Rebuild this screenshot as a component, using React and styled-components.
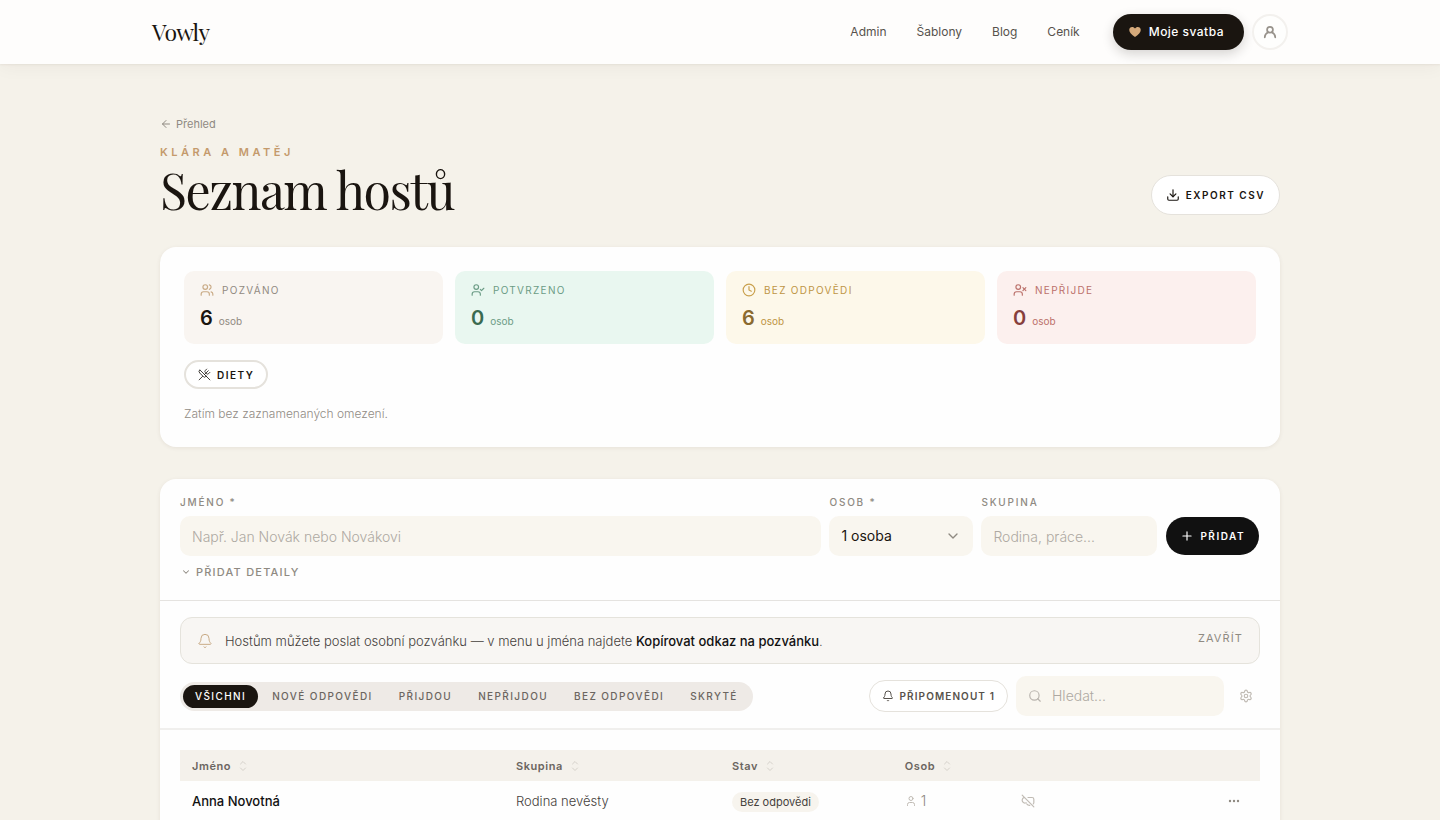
import React from 'react';
import styled, { createGlobalStyle } from 'styled-components';
import {
  ArrowLeft, Bell, ChevronDown, Clock, Download, Plus, Search, Settings,
  User, UserCheck, Users, UserX, UtensilsCrossed
} from 'lucide-react';

const GlobalStyle = createGlobalStyle`
  * { box-sizing: border-box; }
  body {
    margin: 0;
    background: #f5f2ea;
    color: #1a1510;
    font-family: Inter, "Liberation Sans", sans-serif;
    font-size: 14px;
    line-height: 20px;
  }
  button, input, select { font: inherit; color: inherit; margin: 0; }
  button { cursor: pointer; background: none; border: 0; padding: 0; }
  svg { flex: none; }
`;

const Header = styled.header`
  background: #fefdfc;
  box-shadow: 0 1px 2px rgba(60, 40, 20, 0.06), 0 2px 18px rgba(60, 40, 20, 0.05);
`;

const HeaderInner = styled.div`
  max-width: 1136px;
  height: 64px;
  margin: 0 auto;
  display: flex;
  align-items: center;
  justify-content: space-between;
`;

const Logo = styled.a`
  font-family: "Playfair Display", "Liberation Serif", serif;
  font-size: 23px;
  line-height: 32px;
  letter-spacing: -0.03em;
  color: #1a1510;
  text-decoration: none;
`;

const Nav = styled.nav`
  display: flex;
  align-items: center;
  gap: 30px;
`;

const NavLink = styled.a`
  font-size: 12px;
  font-weight: 400;
  color: #57524c;
  text-decoration: none;
`;

const NavActions = styled.div`
  display: flex;
  gap: 8px;
  margin-left: 3px;
`;

const WeddingButton = styled.a`
  display: flex;
  align-items: center;
  gap: 8px;
  height: 36px;
  padding: 0 20px 0 16px;
  border-radius: 18px;
  background: #1a1510;
  color: #fff;
  font-size: 12px;
  font-weight: 550;
  letter-spacing: 0.04em;
  text-decoration: none;
  box-shadow: 0 4px 12px rgba(26, 21, 16, 0.18);
`;

const Avatar = styled.button`
  display: grid;
  place-items: center;
  width: 36px;
  height: 36px;
  border: 2px solid #f3f1ee;
  border-radius: 50%;
  background: #fefefd;
  color: #98938c;
`;

const Main = styled.main`
  max-width: 1168px;
  margin: 0 auto;
  padding: 50px 24px 0;
`;

const PageHead = styled.div`
  display: flex;
  align-items: flex-end;
  justify-content: space-between;
  margin-bottom: 32px;
`;

const BackLink = styled.a`
  display: flex;
  align-items: center;
  gap: 4px;
  font-size: 11px;
  color: #8f8a82;
  text-decoration: none;
`;

const Couple = styled.p`
  margin: 10px 0 0;
  font-size: 11px;
  line-height: 16px;
  font-weight: 600;
  letter-spacing: 0.32em;
  text-transform: uppercase;
  color: #c49a6c;
`;

const Title = styled.h1`
  margin: 5px 0 0;
  font-family: "Playfair Display", "Liberation Serif", serif;
  font-size: 50px;
  line-height: 50px;
  font-weight: 400;
  letter-spacing: -0.03em;
`;

const PillButton = styled.button`
  display: flex;
  align-items: center;
  gap: 6px;
  height: ${(p) => p.$height || 32}px;
  padding: 0 ${(p) => p.$pad || 12}px;
  border: ${(p) => p.$border || 1}px solid #e5e2dc;
  border-radius: 20px;
  background: #fff;
  color: ${(p) => p.$color || '#1a1510'};
  font-size: 10px;
  font-weight: 600;
  letter-spacing: ${(p) => p.$tracking || '0.15em'};
  text-transform: uppercase;
`;

const Card = styled.section`
  background: #fefefe;
  border-radius: 16px;
  box-shadow: 0 1px 4px rgba(60, 40, 20, 0.08);
`;

const Summary = styled(Card)`
  padding: 24px;
  margin-bottom: 32px;
`;

const Stats = styled.div`
  display: grid;
  grid-template-columns: repeat(4, 1fr);
  gap: 12px;
  margin-bottom: 16px;
`;

const Stat = styled.div`
  padding: 9px 16px 11px;
  border-radius: 10px;
  background: ${(p) => p.$bg};
  color: ${(p) => p.$color};
`;

const StatLabel = styled.div`
  display: flex;
  align-items: center;
  gap: 8px;
  font-size: 10px;
  letter-spacing: 0.13em;
  text-transform: uppercase;

  svg { color: ${(p) => p.$icon}; }
`;

const StatValue = styled.div`
  display: flex;
  align-items: baseline;
  gap: 6px;
  margin-top: 6px;
  font-size: 10px;
  line-height: 24px;

  strong {
    font-size: 20px;
    font-weight: 600;
    color: ${(p) => p.$color};
  }
`;

const EmptyNote = styled.p`
  margin: 16px 0 0;
  font-size: 12px;
  line-height: 18px;
  font-weight: 300;
  color: #918c85;
`;

const AddForm = styled.form`
  padding: 16px 20px 18px;
  border-bottom: 1px solid #e5e3e0;
`;

const FormRow = styled.div`
  display: grid;
  grid-template-columns: 1fr 144px 176px auto;
  align-items: end;
  gap: 8px;
`;

const Field = styled.label`
  display: block;
  font-size: 10px;
  line-height: 14px;
  font-weight: 550;
  letter-spacing: 0.18em;
  text-transform: uppercase;
  color: #8f8a82;
`;

const Input = styled.input`
  display: block;
  width: 100%;
  height: 40px;
  margin-top: 7px;
  padding: 0 12px;
  border: 0;
  border-radius: 10px;
  background: #f9f6ef;
  font-size: 14px;
  font-weight: 300;
  color: #1a1510;

  &::placeholder { color: #aea9a2; opacity: 1; }
`;

const SelectBox = styled.span`
  position: relative;
  display: block;
  margin-top: 7px;

  select {
    appearance: none;
    display: block;
    width: 100%;
    height: 40px;
    padding: 0 12px;
    border: 0;
    border-radius: 10px;
    background: #f9f6ef;
    font-size: 14px;
    font-weight: 400;
    color: #1a1510;
  }
  svg {
    position: absolute;
    right: 12px;
    top: 12px;
    color: #8f8a82;
    pointer-events: none;
  }
`;

const AddButton = styled.button`
  display: flex;
  align-items: center;
  gap: 6px;
  height: 38px;
  margin: 0 1px 1px;
  padding: 0 14px;
  border-radius: 20px;
  background: #111;
  color: #fff;
  font-size: 10px;
  font-weight: 600;
  letter-spacing: 0.15em;
  text-transform: uppercase;
`;

const DetailsToggle = styled.button`
  display: flex;
  align-items: center;
  gap: 5px;
  margin-top: 6px;
  padding-left: 1px;
  font-size: 11px;
  font-weight: 500;
  letter-spacing: 0.11em;
  text-transform: uppercase;
  color: #8f8a82;
`;

const Tools = styled.div`
  padding: 16px 20px 12px;
  border-bottom: 2px solid #f0efed;
`;

const Notice = styled.div`
  display: flex;
  align-items: center;
  gap: 12px;
  height: 47px;
  padding: 0 16px;
  border: 1px solid #e5e3dc;
  border-radius: 12px;
  background: #f8f6f3;
  font-size: 13px;
  font-weight: 300;
  color: #45413c;

  p { flex: 1; margin: 0; }
  strong { font-weight: 450; color: #111; }
  svg { color: #c9ab86; }
`;

const CloseButton = styled.button`
  align-self: flex-start;
  margin-top: 10px;
  font-size: 11px;
  font-weight: 400;
  letter-spacing: 0.1em;
  text-transform: uppercase;
  color: #8f8a82;
`;

const FilterRow = styled.div`
  display: flex;
  align-items: center;
  justify-content: space-between;
  margin-top: 12px;
`;

const Tabs = styled.div`
  display: flex;
  gap: 2px;
  padding: 3px;
  border-radius: 15px;
  background: #eeeae6;
`;

const Tab = styled.button`
  height: 23px;
  padding: 0 12px;
  border-radius: 12px;
  background: ${(p) => (p.$active ? '#1a1510' : 'transparent')};
  color: ${(p) => (p.$active ? '#fff' : '#6b6560')};
  font-size: 10px;
  line-height: 23px;
  font-weight: 500;
  letter-spacing: 0.14em;
  text-transform: uppercase;
`;

const FilterActions = styled.div`
  display: flex;
  align-items: center;
  gap: 8px;
`;

const SearchBox = styled.label`
  display: flex;
  align-items: center;
  gap: 10px;
  width: 208px;
  height: 40px;
  padding: 0 12px;
  border-radius: 10px;
  background: #f9f6ef;
  color: #b9b4ae;

  input {
    width: 100%;
    padding: 0;
    border: 0;
    background: none;
    outline: 0;
    font-size: 14px;
    font-weight: 300;
  }
  input::placeholder { color: #aea9a2; opacity: 1; }
`;

const IconButton = styled.button`
  display: grid;
  place-items: center;
  width: ${(p) => p.$width || 28}px;
  height: 28px;
  color: ${(p) => p.$color || '#c0bbb4'};
`;

const TableWrap = styled.div`
  padding: 20px 20px 24px;
`;

const Table = styled.table`
  width: 100%;
  table-layout: fixed;
  border-collapse: collapse;
  text-align: left;

  th {
    height: 31px;
    padding: 0 12px;
    background: #f4f1eb;
    font-size: 11px;
    font-weight: 600;
    letter-spacing: 0.05em;
    color: #6b6560;
  }
  td {
    height: 40px;
    padding: 0 12px;
    font-size: 13px;
    font-weight: 300;
    color: #45413c;
  }
`;

const SortButton = styled.button`
  display: flex;
  align-items: center;
  gap: 8px;
  font-weight: 600;
  letter-spacing: inherit;

  svg { color: #d5d1ca; }
`;

const GuestName = styled.span`
  font-weight: 450;
  color: #111;
`;

const Status = styled.span`
  display: inline-block;
  padding: 0 8px;
  border-radius: 10px;
  background: #f7f4ee;
  font-size: 11px;
  font-weight: 400;
  line-height: 20px;
`;

const PeopleCount = styled.span`
  display: flex;
  align-items: center;
  gap: 4px;
  font-size: 14px;
  color: #8f8a82;

  svg { color: #c0bbb4; }
`;

const RowEnd = styled.div`
  display: flex;
  justify-content: flex-end;
`;

const Heart = () => (
  <svg width="12" height="12" viewBox="0 0 24 24" fill="#d4a97a">
    <path d="M12 22C5 17 0.5 13 0.5 7.8 0.5 4.500 3 2 6.300 2 8.700 2 10.800 3.200 12 5.200 13.200 3.200 15.300 2 17.700 2 21 2 23.500 4.500 23.500 7.800 23.500 13 19 17 12 22z" />
  </svg>
);

const Person = () => (
  <svg width="14" height="14" viewBox="0 0 24 24" fill="none" stroke="currentColor" strokeWidth="3" strokeLinecap="round">
    <circle cx="12" cy="8" r="5" />
    <path d="M3 21c0-4 2-6.500 6-8.500M21 21c0-4-2-6.500-6-8.500" />
  </svg>
);

const LinkOff = () => (
  <svg width="14" height="14" viewBox="0 0 24 24" fill="none" stroke="currentColor" strokeWidth="2" strokeLinecap="round" strokeLinejoin="round">
    <path d="M2 2l20 20M5 6C2 8 1 11 3 13.500 4.500 15.500 7 16 9 15M12 6h7a3 3 0 0 1 3 3v6a3 3 0 0 1-1 2M10 17c1 2 3 2.500 5 2.500" />
  </svg>
);

const SortIcon = () => (
  <svg width="8" height="12" viewBox="0 0 8 12" fill="none" stroke="currentColor" strokeLinecap="round" strokeLinejoin="round">
    <path d="M1.500 4L4 1.500 6.500 4M1.500 8L4 10.500 6.500 8" />
  </svg>
);

const Dots = () => (
  <svg width="12" height="12" viewBox="0 0 12 12" fill="currentColor">
    <circle cx="2" cy="6" r="1.200" /><circle cx="6" cy="6" r="1.200" /><circle cx="10" cy="6" r="1.200" />
  </svg>
);

const navLinks = ['Admin', 'Šablony', 'Blog', 'Ceník'];

const stats = [
  { label: 'Pozváno', value: 6, Icon: Users, bg: '#f9f5f1', color: '#918a82', icon: '#c9ab86', strong: '#1a1510' },
  { label: 'Potvrzeno', value: 0, Icon: UserCheck, bg: '#e9f7f0', color: '#6c9c86', icon: '#6c9c86', strong: '#3a6b50' },
  { label: 'Bez odpovědi', value: 6, Icon: Clock, bg: '#fdf8ea', color: '#bd9545', icon: '#c9a04d', strong: '#8a6a2f' },
  { label: 'Nepřijde', value: 0, Icon: UserX, bg: '#fcf0ee', color: '#bb716b', icon: '#bb716b', strong: '#873f3c' },
];

const filters = ['Všichni', 'Nové odpovědi', 'Přijdou', 'Nepřijdou', 'Bez odpovědi', 'Skryté'];

const columns = [
  { label: 'Jméno', width: '30%' },
  { label: 'Skupina', width: '20%' },
  { label: 'Stav', width: '16%' },
  { label: 'Osob', width: '116px' },
];

function TopBar() {
  return (
    <Header>
      <HeaderInner>
        <Logo href="#">Vowly</Logo>
        <Nav>
          {navLinks.map((label) => <NavLink href="#" key={label}>{label}</NavLink>)}
          <NavActions>
            <WeddingButton href="#"><Heart />Moje svatba</WeddingButton>
            <Avatar aria-label="Profil"><Person /></Avatar>
          </NavActions>
        </Nav>
      </HeaderInner>
    </Header>
  );
}

function GuestSummary() {
  return (
    <Summary>
      <Stats>
        {stats.map(({ label, value, Icon, bg, color, icon, strong }) => (
          <Stat key={label} $bg={bg} $color={color}>
            <StatLabel $icon={icon}><Icon size={14} strokeWidth={2} />{label}</StatLabel>
            <StatValue $color={strong}><strong>{value}</strong>osob</StatValue>
          </Stat>
        ))}
      </Stats>
      <PillButton $height={29} $border={2}><UtensilsCrossed size={13} strokeWidth={1.5} />Diety</PillButton>
      <EmptyNote>Zatím bez zaznamenaných omezení.</EmptyNote>
    </Summary>
  );
}

function AddGuest() {
  return (
    <AddForm onSubmit={(e) => e.preventDefault()}>
      <FormRow>
        <Field>Jméno *<Input placeholder="Např. Jan Novák nebo Novákovi" /></Field>
        <Field>
          Osob *
          <SelectBox>
            <select defaultValue="1">
              <option value="1">1 osoba</option>
              <option value="2">2 osoby</option>
            </select>
            <ChevronDown size={16} strokeWidth={2} />
          </SelectBox>
        </Field>
        <Field>Skupina<Input placeholder="Rodina, práce..." /></Field>
        <AddButton><Plus size={14} strokeWidth={2} />Přidat</AddButton>
      </FormRow>
      <DetailsToggle type="button"><ChevronDown size={10} strokeWidth={2.5} />Přidat detaily</DetailsToggle>
    </AddForm>
  );
}

function GuestTable() {
  return (
    <TableWrap>
      <Table>
        <colgroup>
          {columns.map((c) => <col key={c.label} style={{ width: c.width }} />)}
          <col /><col />
        </colgroup>
        <thead>
          <tr>
            {columns.map((c) => (
              <th key={c.label}><SortButton>{c.label}<SortIcon /></SortButton></th>
            ))}
            <th /><th />
          </tr>
        </thead>
        <tbody>
          <tr>
            <td><GuestName>Anna Novotná</GuestName></td>
            <td>Rodina nevěsty</td>
            <td><Status>Bez odpovědi</Status></td>
            <td><PeopleCount><User size={12} strokeWidth={2} />1</PeopleCount></td>
            <td><IconButton $width={14} aria-label="Bez odkazu"><LinkOff /></IconButton></td>
            <td><RowEnd><IconButton $color="#8f8a82" aria-label="Další akce"><Dots /></IconButton></RowEnd></td>
          </tr>
        </tbody>
      </Table>
    </TableWrap>
  );
}

export default function App() {
  return (
    <>
      <GlobalStyle />
      <TopBar />
      <Main>
        <PageHead>
          <div>
            <BackLink href="#"><ArrowLeft size={12} strokeWidth={2} />Přehled</BackLink>
            <Couple>Klára a Matěj</Couple>
            <Title>Seznam hostů</Title>
          </div>
          <PillButton $height={40} $pad={14}><Download size={14} strokeWidth={2} />Export CSV</PillButton>
        </PageHead>
        <GuestSummary />
        <Card>
          <AddGuest />
          <Tools>
            <Notice>
              <Bell size={16} strokeWidth={1.5} />
              <p>Hostům můžete poslat osobní pozvánku — v menu u jména najdete <strong>Kopírovat odkaz na pozvánku</strong>.</p>
              <CloseButton>Zavřít</CloseButton>
            </Notice>
            <FilterRow>
              <Tabs>
                {filters.map((label, i) => <Tab key={label} $active={i === 0}>{label}</Tab>)}
              </Tabs>
              <FilterActions>
                <PillButton $color="#57524c" $tracking="0.11em"><Bell size={12} strokeWidth={2} />Připomenout 1</PillButton>
                <SearchBox>
                  <Search size={14} strokeWidth={2} />
                  <input placeholder="Hledat..." aria-label="Hledat" />
                </SearchBox>
                <IconButton aria-label="Nastavení"><Settings size={14} strokeWidth={2} /></IconButton>
              </FilterActions>
            </FilterRow>
          </Tools>
          <GuestTable />
        </Card>
      </Main>
    </>
  );
}
